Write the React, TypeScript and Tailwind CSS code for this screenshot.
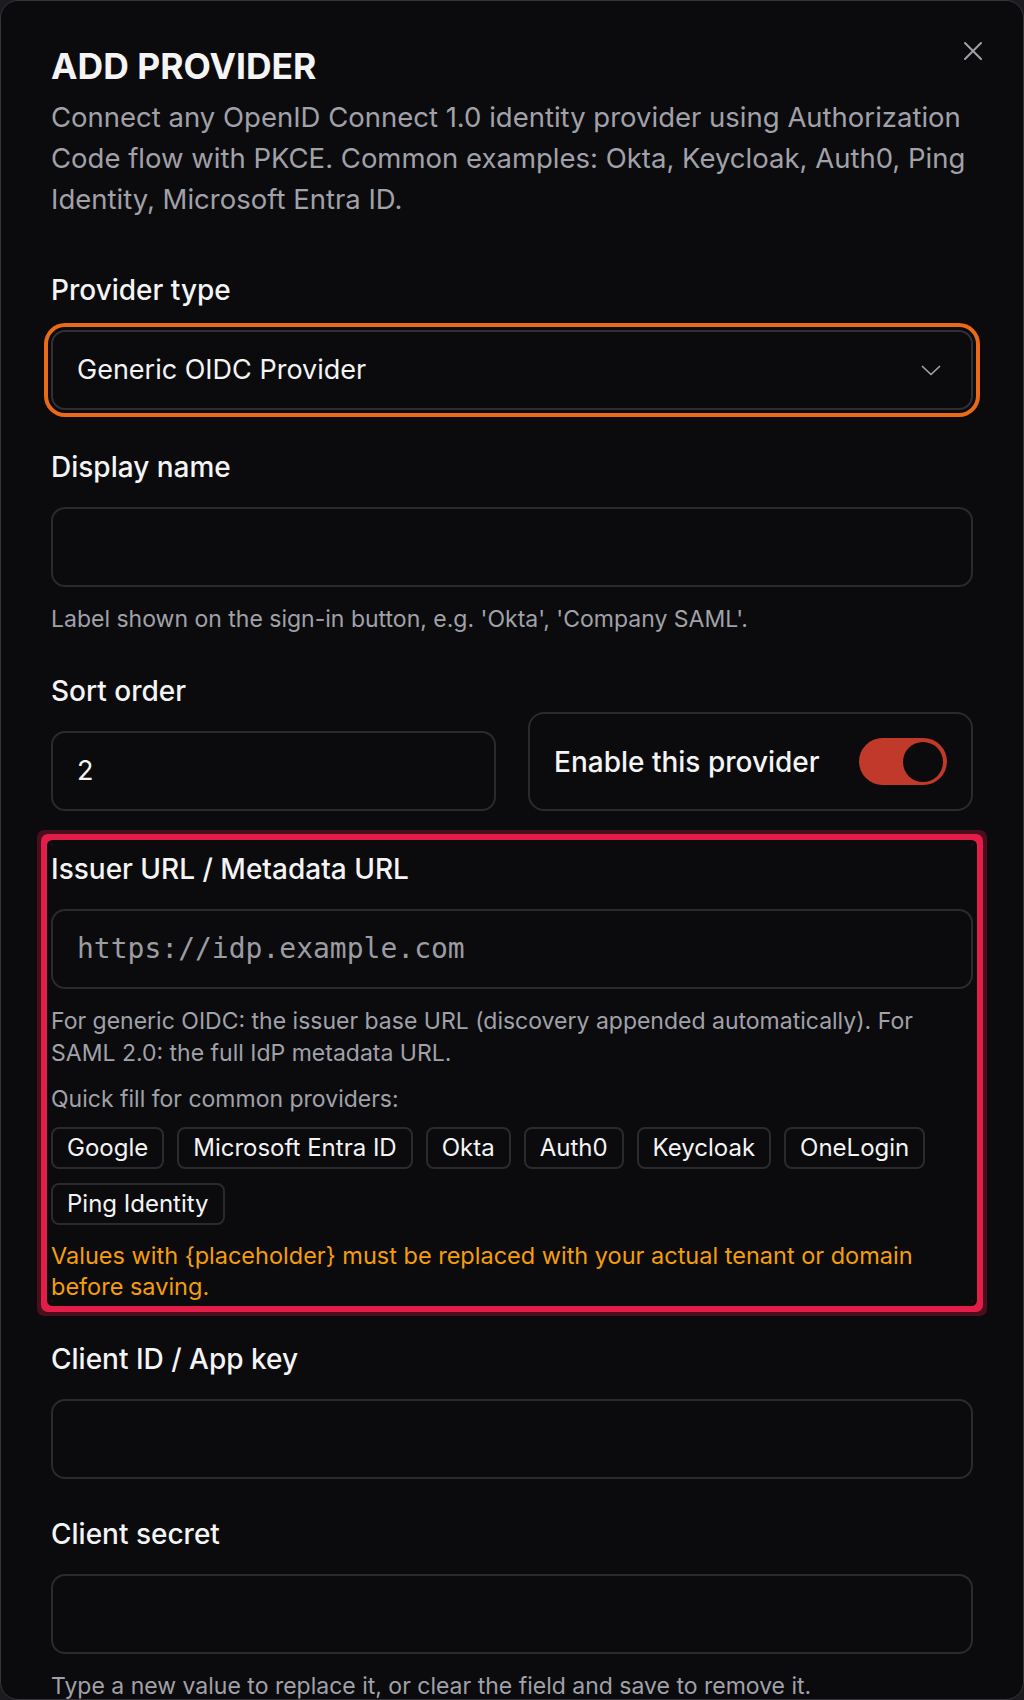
import { useState } from "react";

const quickFill = ["Google", "Microsoft Entra ID", "Okta", "Auth0", "Keycloak", "OneLogin", "Ping Identity"];

function FieldLabel({ children }: { children: React.ReactNode }) {
  return <div className="text-[28px] font-medium leading-[40px] text-[#f4f4f5]">{children}</div>;
}

function TextInput({ value, placeholder, mono }: { value?: string; placeholder?: string; mono?: boolean }) {
  return (
    <div className="mt-5 flex h-20 items-center rounded-[14px] border-2 border-[#2a2a2f] bg-[#0b0b0d] px-6">
      {value ? (
        <span className="text-[27px] text-[#f4f4f5]">{value}</span>
      ) : placeholder ? (
        <span
          className={
            mono
              ? "font-['DejaVu_Sans_Mono',monospace] text-[28px] text-[#9c9ca3]"
              : "text-[27px] text-[#71717a]"
          }
        >
          {placeholder}
        </span>
      ) : null}
    </div>
  );
}

function Toggle({ on }: { on: boolean }) {
  return (
    <div
      className={`flex h-[47px] w-[88px] items-center rounded-full px-1 ${
        on ? "justify-end bg-[#c0392b]" : "justify-start bg-[#3f3f46]"
      }`}
    >
      <div className="h-10 w-10 rounded-full bg-[#0b0b0d]" />
    </div>
  );
}

export default function App() {
  const [enabled] = useState(true);

  return (
    <div className="h-[1700px] w-[1024px] bg-[#1c1c20] font-['Inter',sans-serif]">
      <div className="relative h-full overflow-hidden rounded-[18px] border border-[#34343a] bg-[#0b0b0d] px-[50px] pt-[46px]">
        {/* close */}
        <button className="absolute right-[40px] top-[40px] text-[#a1a1aa]">
          <svg width="20" height="20" viewBox="0 0 20 20" fill="none" stroke="currentColor" strokeWidth="2" strokeLinecap="round">
            <path d="M2 2 18 18M18 2 2 18" />
          </svg>
        </button>

        <h2 className="text-[35.5px] font-bold leading-[40px] text-[#f4f4f5]">ADD PROVIDER</h2>
        <p className="mt-[10px] text-[27.5px] leading-[41px] text-[#a1a1aa]">
          Connect any OpenID Connect 1.0 identity provider using Authorization Code flow with PKCE. Common examples: Okta,
          Keycloak, Auth0, Ping Identity, Microsoft Entra ID.
        </p>

        {/* provider type */}
        <div className="mt-[50px]">
          <FieldLabel>Provider type</FieldLabel>
          <div className="mt-5 flex h-20 items-center justify-between rounded-[14px] border-2 border-[#2f2f35] bg-[#0b0b0d] pl-6 pr-[30px] ring-4 ring-[#ea6a1a] ring-offset-[3px] ring-offset-[#0b0b0d]">
            <span className="text-[27px] text-[#f4f4f5]">Generic OIDC Provider</span>
            <svg width="20" height="11" viewBox="0 0 20 11" fill="none" stroke="#a8a29e" strokeWidth="1.7" strokeLinecap="round" strokeLinejoin="round">
              <path d="M1.5 1.5 10 9.5 18.5 1.5" />
            </svg>
          </div>
        </div>

        {/* display name */}
        <div className="mt-[37px]">
          <FieldLabel>Display name</FieldLabel>
          <TextInput />
          <p className="mt-4 text-[23px] leading-8 text-[#a1a1aa]">
            Label shown on the sign-in button, e.g. 'Okta', 'Company SAML'.
          </p>
        </div>

        {/* sort order + enable */}
        <div className="mt-[36px] grid grid-cols-2 items-end gap-8">
          <div>
            <FieldLabel>Sort order</FieldLabel>
            <TextInput value="2" />
          </div>
          <div className="flex h-[99px] items-center justify-between rounded-[16px] border-2 border-[#2a2a2f] pl-6 pr-6">
            <span className="text-[28px] font-medium text-[#f4f4f5]">Enable this provider</span>
            <Toggle on={enabled} />
          </div>
        </div>

        {/* issuer url, flagged */}
        <div className="mt-[33px] rounded-[2px] pt-[5px] shadow-[0_0_0_4px_#0b0b0d,0_0_0_10px_#e11d48,0_0_0_14px_#4a0f1d]">
          <FieldLabel>Issuer URL / Metadata URL</FieldLabel>
          <TextInput placeholder="https://idp.example.com" mono />
          <p className="mt-4 text-[23px] leading-8 text-[#a1a1aa]">
            For generic OIDC: the issuer base URL (discovery appended automatically). For SAML 2.0: the full IdP metadata URL.
          </p>
          <p className="mt-[14px] text-[23px] leading-8 text-[#a1a1aa]">Quick fill for common providers:</p>
          <div className="mt-3 flex flex-wrap gap-x-[13px] gap-y-[14px]">
            {quickFill.map((name) => (
              <button
                key={name}
                className="flex h-[42px] items-center rounded-lg border-2 border-[#2a2a2f] px-[14px] text-[24px] leading-none text-[#f4f4f5]"
              >
                {name}
              </button>
            ))}
          </div>
          <p className="mt-[15px] text-[23.5px] leading-[31px] text-[#f59e0b]">
            Values with {"{placeholder}"} must be replaced with your actual tenant or domain before saving.
          </p>
        </div>

        {/* client id */}
        <div className="mt-[37px]">
          <FieldLabel>Client ID / App key</FieldLabel>
          <TextInput />
        </div>

        {/* client secret */}
        <div className="mt-[35px]">
          <FieldLabel>Client secret</FieldLabel>
          <TextInput />
          <p className="mt-4 text-[23px] leading-8 text-[#a1a1aa]">
            Type a new value to replace it, or clear the field and save to remove it.
          </p>
        </div>
      </div>
    </div>
  );
}
